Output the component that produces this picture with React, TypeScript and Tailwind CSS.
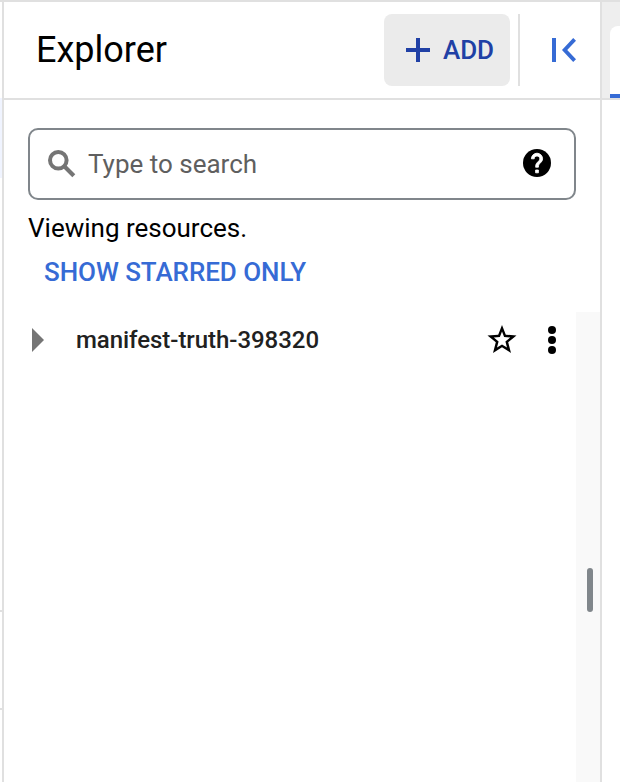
function PlusIcon() {
  return (
    <svg className="h-6 w-6 shrink-0" viewBox="0 0 24 24" fill="currentColor">
      <path d="M10 0h4v10h10v4H14v10h-4V14H0v-4h10z" />
    </svg>
  );
}

function CollapseIcon() {
  return (
    <svg className="h-6 w-6 shrink-0" viewBox="0 0 24 24" fill="currentColor">
      <path d="M0 0h4v24H0zM24 2.8 21.2 0 10 12l11.2 12 2.8-2.8L15.2 12z" />
    </svg>
  );
}

function SearchIcon() {
  return (
    <svg className="h-7 w-7 shrink-0" viewBox="0 0 28 28" fill="none" stroke="currentColor">
      <circle cx="10.3" cy="10.3" r="8.3" strokeWidth="4" />
      <path d="m15.8 15.8 10 10" strokeWidth="4.2" />
    </svg>
  );
}

function HelpIcon() {
  return (
    <svg className="mb-0.5 h-7 w-7 shrink-0" viewBox="2 2 20 20">
      <circle cx="12" cy="12" r="10" fill="black" />
      <path
        fill="white"
        stroke="white"
        strokeWidth="0.6"
        d="M13 19h-2v-2h2v2zm2.07-7.75-.9.92C13.45 12.9 13 13.5 13 15h-2v-.5c0-1.1.45-2.1 1.17-2.83l1.24-1.26c.37-.36.59-.86.59-1.41 0-1.1-.9-2-2-2s-2 .9-2 2H8c0-2.21 1.79-4 4-4s4 1.79 4 4c0 .88-.36 1.68-.93 2.25z"
      />
    </svg>
  );
}

function StarIcon() {
  return (
    <svg className="mb-0.5 h-7 w-[30px] shrink-0" viewBox="-0.5 0 30 28" fill="currentColor" fillRule="evenodd">
      <path d="M14.5 0 18.3 9.7 29 10.4 20.7 17.2 23.5 28 14.5 22.2 5.5 28 8.3 17.2 0 10.4 10.7 9.7zM14.5 6.4 12.4 12.1 6.3 12.5 11.1 16.4 9.5 22.6 14.5 19.4 19.5 22.6 17.9 16.4 22.7 12.5 16.6 12.1z" />
    </svg>
  );
}

function MoreIcon() {
  return (
    <svg className="h-7 w-2 shrink-0" viewBox="0 0 8 28" fill="currentColor">
      <circle cx="4" cy="4" r="4" />
      <circle cx="4" cy="14" r="4" />
      <circle cx="4" cy="24" r="4" />
    </svg>
  );
}

export default function App() {
  return (
    <div className="flex h-[782px] w-[620px] overflow-hidden border-t-2 border-[#e0e0e0] bg-white font-['Roboto',sans-serif] text-black">
      <div className="flex w-0.5 shrink-0 flex-col">
        <div className="h-24" />
        <div className="h-20 bg-[#f0f4ff]" />
        <div className="h-[434px] border-b-2 border-[#e0e0e0]" />
        <div className="h-[98px] border-b-2 border-[#e0e0e0]" />
      </div>

      <aside className="flex w-[600px] shrink-0 flex-col border-x-2 border-[#e0e0e0]">
        <header className="flex h-[98px] shrink-0 items-center border-b-2 border-[#e0e0e0]">
          <h1 className="ml-8 flex-1 text-[36px] leading-[48px]">Explorer</h1>
          <button className="flex h-[72px] w-[126px] items-center gap-[13px] rounded-lg bg-[#ebebeb] pl-[22px] text-[26px] font-medium tracking-[-0.1px] text-[#2040a5]">
            <PlusIcon />
            <span>ADD</span>
          </button>
          <div className="ml-2 h-[72px] w-0.5 bg-[#e0e0e0]" />
          <button className="mr-6 ml-8 text-[#366bd5]">
            <CollapseIcon />
          </button>
        </header>

        <div className="mx-6 mt-7 flex h-[72px] shrink-0 items-center rounded-[10px] border-2 border-[#80868b] pr-[23px] pl-[18px]">
          <span className="text-[#757575]">
            <SearchIcon />
          </span>
          <span className="ml-3 flex-1 text-[26px] leading-8 text-[#5f5f5f]">Type to search</span>
          <HelpIcon />
        </div>

        <p className="mt-3 ml-6 text-[26px] leading-8">Viewing resources.</p>
        <button className="mt-3 ml-10 self-start text-[26px] leading-8 font-medium tracking-[-0.06px] text-[#366bd5]">
          SHOW STARRED ONLY
        </button>

        <div className="mt-6 flex flex-1">
          <div className="flex h-14 flex-1 items-center pl-7">
            <svg className="h-6 w-3 shrink-0 text-[#757575]" viewBox="0 0 12 24" fill="currentColor">
              <path d="m0 0 12 12L0 24z" />
            </svg>
            <span className="ml-8 flex-1 text-[24px] leading-8 font-medium tracking-[-0.05px] text-[#212121]">
              manifest-truth-398320
            </span>
            <StarIcon />
            <span className="mr-5 ml-[31px]">
              <MoreIcon />
            </span>
          </div>
          <div className="w-6 bg-[#f9f9f9] pt-64 pl-[11px]">
            <div className="h-11 w-1.5 rounded-full bg-[#80868b]" />
          </div>
        </div>
      </aside>

      <main className="flex-1">
        <div className="h-[98px] border-b-2 border-[#e0e0e0] bg-[#eeeeee] pt-6 pl-2">
          <div className="flex h-full flex-col justify-end overflow-hidden rounded-tl-lg bg-white">
            <div className="h-1 bg-[#366bd5]" />
          </div>
        </div>
      </main>
    </div>
  );
}
